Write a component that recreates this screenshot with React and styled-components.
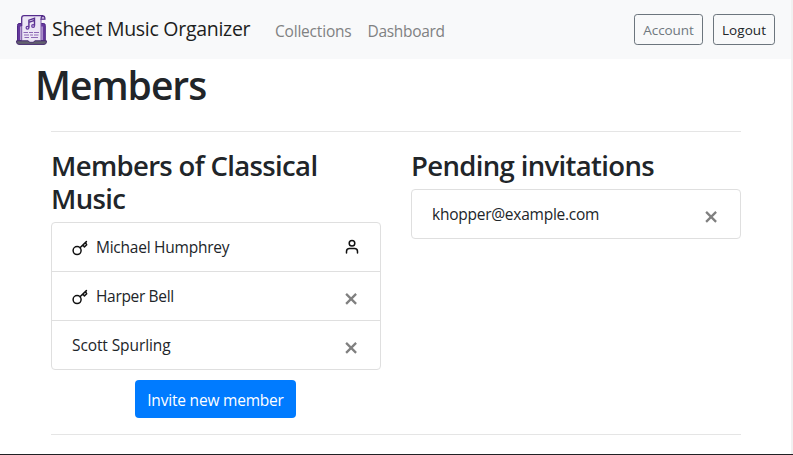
import React from "react";
import styled, { createGlobalStyle } from "styled-components";

const GlobalStyle = createGlobalStyle`
  *, *::before, *::after { box-sizing: border-box; }
  html { background: #f1f1f1; }
  body {
    margin: 0;
    overflow: hidden;
    font-family: "Open Sans", "Noto Sans", sans-serif;
    font-size: 16px;
    line-height: 24px;
    color: #212529;
  }
  h1, h2, ul { margin: 0; padding: 0; }
  svg { display: block; flex: none; }
`;

const Page = styled.div`
  width: 791px;
  height: 454px;
  background: #fff;
`;

const Frame = styled.div`
  height: 455px;
  border-bottom: 1px solid #212124;
`;

const Navbar = styled.nav`
  display: flex;
  align-items: center;
  height: 59px;
  padding: 0 16px;
  background: #f8f9fa;
`;

const Brand = styled.a`
  display: flex;
  align-items: center;
  gap: 5px;
  width: 251px;
  padding-top: 1px;
  white-space: nowrap;
`;

const Text = styled.span`
  letter-spacing: ${(p) => p.$track || 0}px;
  white-space: nowrap;
`;

const BrandName = styled(Text)`
  margin-top: -2px;
  font-size: 19.5px;
  line-height: 30px;
  color: #1d1e20;
`;

const NavLink = styled.a`
  padding: 2px 8px 0;
  color: #808182;
  font-size: 15.5px;
`;

const NavActions = styled.div`
  display: flex;
  gap: 10px;
  margin-left: auto;
`;

const OutlineButton = styled.button`
  width: ${(p) => p.$width}px;
  height: 31px;
  padding: 1px 0 0;
  border: 1px solid #6c757d;
  border-radius: 3.2px;
  background: transparent;
  color: ${(p) => (p.$muted ? "#6f787f" : "#212529")};
  font: 13.5px/20px "Open Sans", sans-serif;
`;

const Content = styled.main`
  padding: 0 36px;
`;

const Title = styled.h1`
  padding-top: 2px;
  height: 72px;
  margin-left: -1px;
  font-size: 39px;
  line-height: 48px;
  font-weight: 600;
`;

const Section = styled.section`
  margin: 0 14px 0 15px;
  width: 690px;
  height: 304px;
  border: solid #e5e5e5;
  border-width: 1px 0;
`;

const Columns = styled.div`
  display: grid;
  grid-template-columns: 330px 330px;
  gap: 30px;
  align-items: start;
`;

const Column = styled.div`
  display: flex;
  flex-direction: column;
  align-items: center;
  padding-top: 17px;
`;

const Heading = styled.h2`
  align-self: stretch;
  margin-bottom: 7px;
  font-size: 27.5px;
  line-height: 33px;
  font-weight: 600;
  letter-spacing: -0.65px;
`;

const List = styled.ul`
  width: 330px;
  list-style: none;
  border: 1px solid #dfdfdf;
  border-radius: 4px;
`;

const Row = styled.li`
  display: flex;
  align-items: center;
  height: ${(p) => (p.$first ? 48 : 49)}px;
  padding: 0 19px 0 20px;
  border-top: ${(p) => (p.$first ? "0" : "1px solid #dfdfdf")};
  font-size: 15.5px;
`;

const KeySlot = styled.span`
  width: 24px;
  padding-top: 2px;
`;

const ActionSlot = styled.span`
  margin-left: auto;
  padding-top: ${(p) => (p.$user ? 0 : 5)}px;
`;

const InviteButton = styled.button`
  width: 161px;
  height: 38px;
  margin: 10px 2px 0 0;
  padding: 1px 0 0 1px;
  border: 0;
  border-radius: 4px;
  background: #007bff;
  color: #fff;
  font: 15.5px/24px "Open Sans", sans-serif;
`;

const Logo = () => (
  <svg width="31" height="30" viewBox="0 0 31 30" fill="none">
    <path d="M5.5 8.5H3Q1.5 8.5 1.5 10.5V26H29.3V10.5Q29.3 8.5 27.8 8.5H25" fill="#65389c" stroke="#4d2884" />
    <path d="M4 11.5H26.8V25H4Z" fill="#b9a3d3" />
    <path d="M5.7 26V3Q5.7 .8 8 .8H25V26Z" fill="#ece6f5" />
    <path d="M5.7 11V3Q5.7 .7 8 .7H27" stroke="#562d8d" strokeWidth="1.3" />
    <path d="M5.7 11V25M25 4V25" stroke="#7d59a8" />
    <path d="M25 4.2Q25 1 27 .9Q29 1 29 4.2Z" fill="#c7b2df" stroke="#4d2884" strokeWidth="1.1" />
    <path d="M12.9 12.4V5.2L18.5 3.3V10.7M12.9 7.3L18.5 5.4" stroke="#59308f" strokeWidth="1.4" />
    <circle cx="11.5" cy="12.7" r="1.4" stroke="#64369e" strokeWidth="1.2" />
    <circle cx="17.1" cy="11" r="1.4" stroke="#64369e" strokeWidth="1.2" />
    <path d="M7.5 17.5H12M13 17.5H17M18 17.5H23M8 20H13M14 20H17M18 20H22.5M8.5 22.5H13M15 22.5H22" stroke="#8d68b5" strokeWidth="1.1" />
    <path d="M.6 25.8H12L13.5 27H17.5L19 25.8H30.4V27Q30.4 29.4 28 29.4H3Q.6 29.4 .6 27Z" fill="#62616e" stroke="#472a70" />
    <path d="M12.7 25H18.3L17.2 26.8H13.8Z" fill="#e9e1f2" />
  </svg>
);

const KeyIcon = () => (
  <svg width="17" height="17" viewBox="0 0 17 17" fill="none" stroke="#111" strokeWidth="1.5" strokeLinecap="round" strokeLinejoin="round">
    <circle cx="5.1" cy="10.6" r="4" />
    <path d="M8 7.7L14.4 1.6M10.9 4.9L12.4 7L14.7 4.8L13.5 2.5" />
  </svg>
);

const UserIcon = () => (
  <svg width="18" height="18" viewBox="0 0 18 18" fill="none" stroke="#111" strokeWidth="1.5" strokeLinecap="round" strokeLinejoin="round">
    <circle cx="9" cy="5.2" r="2.8" />
    <path d="M3.5 15.1V13.6Q3.5 10.6 6.5 10.6H11.5Q14.5 10.6 14.5 13.6V15.1" />
  </svg>
);

const RemoveIcon = () => (
  <svg width="19" height="18" viewBox="0 0 19 18" fill="none" stroke="#808080" strokeWidth="2.3">
    <path d="M4.1 3.9L14.1 13.9M14.1 3.9L4.1 13.9" />
  </svg>
);

function Entry({ name, track, admin, self, first }) {
  return (
    <Row $first={first}>
      {admin && <KeySlot><KeyIcon /></KeySlot>}
      <Text $track={track}>{name}</Text>
      <ActionSlot $user={self}>{self ? <UserIcon /> : <RemoveIcon />}</ActionSlot>
    </Row>
  );
}

export default function App() {
  return (
    <Frame>
      <GlobalStyle />
      <Page>
        <Navbar>
          <Brand>
            <Logo />
            <BrandName $track={-0.28}>Sheet Music Organizer</BrandName>
          </Brand>
          <NavLink><Text $track={-0.2}>Collections</Text></NavLink>
          <NavLink><Text $track={-0.3}>Dashboard</Text></NavLink>
          <NavActions>
            <OutlineButton $width={69} $muted><Text $track={-0.1}>Account</Text></OutlineButton>
            <OutlineButton $width={62}><Text $track={0.05}>Logout</Text></OutlineButton>
          </NavActions>
        </Navbar>
        <Content>
          <Title><Text $track={-1}>Members</Text></Title>
          <Section>
            <Columns>
              <Column>
                <Heading>Members of Classical Music</Heading>
                <List>
                  <Entry first admin self name="Michael Humphrey" track={-0.24} />
                  <Entry admin name="Harper Bell" track={-0.33} />
                  <Entry name="Scott Spurling" track={-0.1} />
                </List>
                <InviteButton><Text $track={-0.2}>Invite new member</Text></InviteButton>
              </Column>
              <Column>
                <Heading>Pending invitations</Heading>
                <List>
                  <Entry first name="khopper@example.com" track={-0.25} />
                </List>
              </Column>
            </Columns>
          </Section>
        </Content>
      </Page>
    </Frame>
  );
}
